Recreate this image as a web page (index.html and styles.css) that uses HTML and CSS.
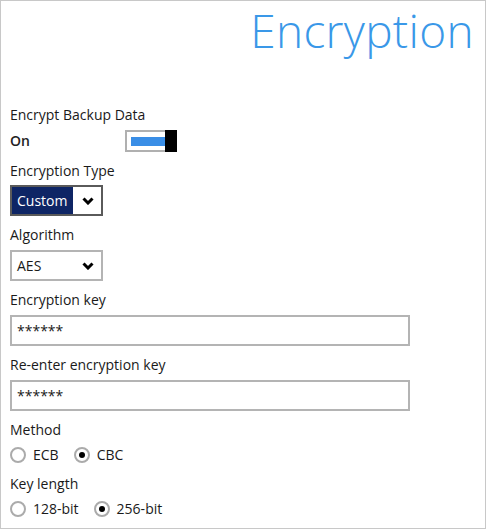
FILE: index.html
```html
<!DOCTYPE html>
<html lang="en">
<head>
<meta charset="UTF-8">
<title>Encryption</title>
<link rel="stylesheet" href="styles.css">
</head>
<body>

<div class="panel">
  <h1 class="title">Encryption</h1>

  <div class="form">
    <!-- encrypt on / off -->
    <p class="label first">Encrypt Backup Data</p>
    <div class="switch-row">
      <span class="switch-state">On</span>
      <div class="switch">
        <div class="switch-track"><div class="switch-fill"></div></div>
        <div class="switch-knob"></div>
      </div>
    </div>

    <p class="label">Encryption Type</p>
    <div class="select select-active">
      <span class="select-value">Custom</span>
      <span class="select-arrow">
        <svg width="12" height="8" viewBox="0 0 12 8"><polyline points="1.5,1.5 6,6 10.5,1.5" fill="none" stroke="#000" stroke-width="3"/></svg>
      </span>
    </div>

    <p class="label">Algorithm</p>
    <div class="select">
      <span class="select-value">AES</span>
      <span class="select-arrow">
        <svg width="12" height="8" viewBox="0 0 12 8"><polyline points="1.5,1.5 6,6 10.5,1.5" fill="none" stroke="#000" stroke-width="3"/></svg>
      </span>
    </div>

    <p class="label">Encryption key</p>
    <div class="field">******</div>

    <p class="label">Re-enter encryption key</p>
    <div class="field">******</div>

    <p class="label">Method</p>
    <div class="radio-group">
      <label class="radio"><span class="radio-dot"></span>ECB</label>
      <label class="radio checked"><span class="radio-dot"></span>CBC</label>
    </div>

    <p class="label">Key length</p>
    <div class="radio-group">
      <label class="radio"><span class="radio-dot"></span>128-bit</label>
      <label class="radio checked"><span class="radio-dot"></span>256-bit</label>
    </div>
  </div>
</div>

</body>
</html>
```

FILE: styles.css
```css
body {
  margin: 0;
  font-family: "Open Sans", "Noto Sans", sans-serif;
  font-size: 14px;
  color: #1a1a1a;
  background: #fff;
}

.panel {
  width: 486px;
  height: 529px;
  box-sizing: border-box;
  border: 1px solid #c8c8c8;
  padding: 0 9px;
}

.title {
  margin: 0;
  text-align: right;
  font-size: 46px;
  font-weight: 300;
  line-height: 58px;
  letter-spacing: 0.3px;
  color: #3a98e8;
  padding-right: 2px;
}

.label {
  margin: 9px 0 0;
  line-height: 20px;
}

.label.first {
  margin-top: 46px;
}

/* on/off switch */
.switch-row {
  display: flex;
  align-items: center;
  height: 22px;
  margin-top: 5px;
}

.switch-state {
  width: 115px;
  font-weight: 600;
  line-height: 20px;
  color: #222;
}

.switch {
  display: flex;
  height: 22px;
}

.switch-track {
  width: 40px;
  box-sizing: border-box;
  border: 2px solid #b0b0b0;
  border-right: none;
  padding-left: 4px;
  display: flex;
  align-items: center;
}

.switch-fill {
  flex: 1;
  height: 9px;
  background: #3a8ee6;
}

.switch-knob {
  width: 12px;
  background: #000;
}

/* dropdowns */
.select {
  display: flex;
  width: 93px;
  height: 31px;
  box-sizing: border-box;
  border: 2px solid #b4b4b4;
  margin-top: 5px;
}

.select-active {
  border-color: #5a5a5a;
  margin-top: 4px;
}

.select-value {
  width: 61px;
  padding-left: 5px;
  box-sizing: border-box;
  line-height: 27px;
}

.select-active .select-value {
  background: #0e2565;
  color: #fff;
}

.select-arrow {
  flex: 1;
  display: flex;
  align-items: center;
  padding-left: 9px;
}

/* text fields */
.field {
  width: 400px;
  height: 31px;
  box-sizing: border-box;
  border: 2px solid #b4b4b4;
  margin-top: 5px;
  padding-left: 5px;
  line-height: 27px;
}

/* radios */
.radio-group {
  display: flex;
  gap: 15px;
  height: 18px;
  margin-top: 6px;
}

.radio-group + .label {
  margin-top: 10px;
}

.radio {
  display: flex;
  align-items: center;
  gap: 7px;
  line-height: 18px;
}

.radio-dot {
  width: 16px;
  height: 16px;
  box-sizing: border-box;
  border: 2px solid #ababab;
  border-radius: 50%;
  display: flex;
  align-items: center;
  justify-content: center;
}

.radio.checked .radio-dot::after {
  content: "";
  width: 6px;
  height: 6px;
  border-radius: 50%;
  background: #000;
}
```
